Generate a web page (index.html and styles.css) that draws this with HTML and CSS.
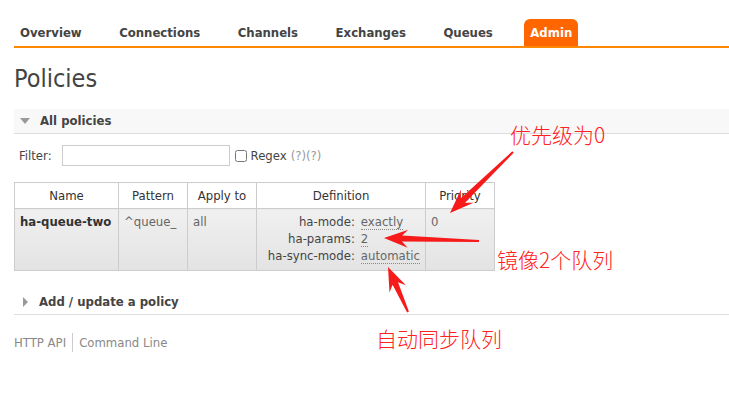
FILE: index.html
```html
<!DOCTYPE html>
<html>
<head>
<meta charset="utf-8">
<link rel="stylesheet" href="styles.css">
</head>
<body>
<div class="main">
  <nav class="menu">
    <ul>
      <li>Overview</li>
      <li>Connections</li>
      <li>Channels</li>
      <li>Exchanges</li>
      <li>Queues</li>
      <li class="selected">Admin</li>
    </ul>
  </nav>
  <h1>Policies</h1>
  <div class="section">
    <h2 class="sec-h"><span class="tri-down"></span>All policies</h2>
    <div class="sec-body">
      <div class="filter">
        <span class="filter-label">Filter:</span>
        <input class="filter-input" type="text">
        <label class="regex"><input class="check" type="checkbox">Regex <span class="help">(?)(?)</span></label>
      </div>
      <table class="list">
        <thead>
          <tr>
            <th class="c-name">Name</th>
            <th class="c-pattern">Pattern</th>
            <th class="c-apply">Apply to</th>
            <th class="c-def">Definition</th>
            <th class="c-prio">Priority</th>
          </tr>
        </thead>
        <tbody>
          <tr>
            <td class="name">ha-queue-two</td>
            <td class="muted">^queue_</td>
            <td class="muted">all</td>
            <td>
              <div class="def">
                <span class="k">ha-mode:</span><span class="v"><abbr>exactly</abbr></span>
                <span class="k">ha-params:</span><span class="v"><abbr>2</abbr></span>
                <span class="k">ha-sync-mode:</span><span class="v"><abbr>automatic</abbr></span>
              </div>
            </td>
            <td class="muted">0</td>
          </tr>
        </tbody>
      </table>
    </div>
  </div>
  <div class="section">
    <h2 class="sec-h closed"><span class="tri-right"></span>Add / update a policy</h2>
  </div>
  <footer class="footer">
    <span class="f-link">HTTP API</span><span class="f-sep"></span><span class="f-link">Command Line</span>
  </footer>
</div>

<div class="annot">
  <svg class="arrows" width="729" height="416" viewBox="0 0 729 416">
    <polygon points="513.7,152.7 465.0,202.7 473.5,202.8 450,213 460.9,189.8 460.8,198.3 512.3,151.3"/>
    <polygon points="479,242 401.9,241.6 407.7,247.8 384,238 408.3,229.8 402.1,235.6 479,240"/>
    <polygon points="407.1,312.4 392.6,284.7 389.5,292.6 388,267 405.9,285.2 398.0,282.3 408.9,311.6"/>
  </svg>
  <span class="note n1">优先级为0</span>
  <span class="note n2">镜像2个队列</span>
  <span class="note n3">自动同步队列</span>
</div>
</body>
</html>
```

FILE: styles.css
```css
html, body {
  margin: 0;
  padding: 0;
  background: #fff;
}
body {
  font-family: "DejaVu Sans Condensed", "DejaVu Sans", sans-serif;
  font-size: 13px;
  color: #444;
  position: relative;
  width: 729px;
  height: 416px;
  overflow: hidden;
}
.main {
  padding-left: 14px;
}
.menu ul {
  list-style: none;
  margin: 19px 0 0 0;
  padding: 0;
  display: flex;
  border-bottom: 2px solid #f80;
}
.menu li {
  font-weight: bold;
  padding: 6px 6px;
  line-height: 15px;
  margin-right: 25.5px;
  color: #444;
  border-radius: 6px 6px 0 0;
}
.menu li.selected {
  background: #f60;
  color: #fff;
}
h1 {
  font-size: 25px;
  font-weight: normal;
  line-height: 30px;
  margin: 16px 0 15px 0;
  color: #444;
}
.sec-h {
  margin: 0;
  height: 24px;
  line-height: 24px;
  font-size: 13px;
  font-weight: bold;
  background: #f8f8f8;
  border-bottom: 1px solid #ddd;
  display: flex;
  align-items: center;
  color: #444;
}
.sec-h.closed {
  background: #fff;
  margin-top: 19px;
}
.tri-down {
  width: 0;
  height: 0;
  border-left: 5px solid transparent;
  border-right: 5px solid transparent;
  border-top: 6px solid #999;
  margin: 0 10px 0 6px;
}
.tri-right {
  width: 0;
  height: 0;
  border-top: 5px solid transparent;
  border-bottom: 5px solid transparent;
  border-left: 5px solid #999;
  margin: 0 11px 0 9px;
}
.filter {
  display: flex;
  align-items: center;
  margin-top: 11px;
  padding-left: 5px;
  height: 21px;
}
.filter-label {
  margin-right: 10px;
}
.filter-input {
  width: 166px;
  height: 19px;
  box-sizing: content-box;
  padding: 0;
  border: 1px solid #ccc;
  margin: 0 5px 0 0;
}
.regex {
  display: flex;
  align-items: center;
}
.check {
  width: 12px;
  height: 12px;
  margin: 0 4px 0 0;
}
.help {
  color: #999;
  margin-left: 4px;
}
.list {
  margin-top: 16px;
  border-collapse: collapse;
  table-layout: fixed;
}
.list th, .list td {
  border: 1px solid #ccc;
}
.list th {
  font-weight: normal;
  background: #fff;
  height: 25px;
  padding: 0;
  text-align: center;
  color: #333;
}
.c-name { width: 103px; }
.c-pattern { width: 68px; }
.c-apply { width: 68px; }
.c-def { width: 168px; }
.c-prio { width: 68px; }
.list td {
  background: linear-gradient(#f0f0f0, #e3e3e3);
  vertical-align: top;
  padding: 4px 5px 4px 5px;
  line-height: 17px;
  height: 53px;
}
.list td.name {
  font-weight: bold;
  color: #333;
}
.muted {
  color: #666;
}
.def {
  display: grid;
  grid-template-columns: auto auto;
  column-gap: 6px;
  justify-content: end;
}
.def .k {
  text-align: right;
  color: #444;
}
.def .v {
  text-align: left;
  color: #666;
}
.def abbr {
  text-decoration: none;
  border-bottom: 1px dotted #888;
}
.footer {
  display: flex;
  align-items: center;
  margin-top: 18px;
  height: 19px;
  color: #888;
}
.f-sep {
  width: 1px;
  height: 19px;
  background: #ccc;
  margin: 0 6px;
}
.annot {
  position: absolute;
  left: 0;
  top: 0;
  width: 729px;
  height: 416px;
  pointer-events: none;
}
.arrows {
  position: absolute;
  left: 0;
  top: 0;
}
.arrows polygon {
  fill: #f61a1a;
}
.note {
  position: absolute;
  font-family: "Noto Sans CJK SC", "DejaVu Sans", sans-serif;
  font-size: 21px;
  font-weight: 300;
  line-height: 24px;
  color: #f22;
  white-space: nowrap;
}
.n1 { left: 510px; top: 122px; }
.n2 { left: 497px; top: 247px; }
.n3 { left: 376px; top: 326px; }
```
